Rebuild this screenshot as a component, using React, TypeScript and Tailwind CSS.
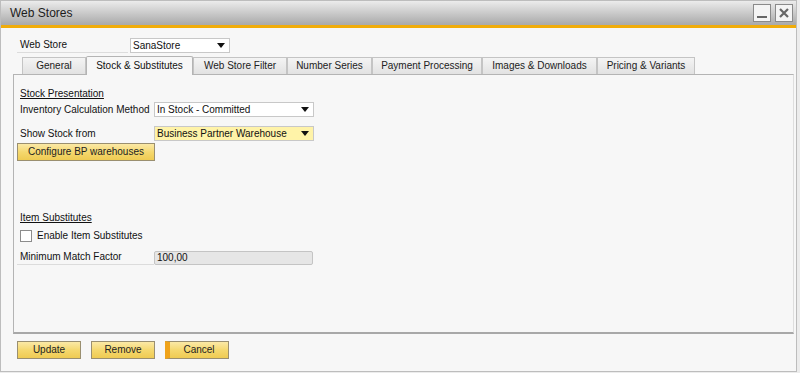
import React from "react";

const font = { fontFamily: '"Liberation Sans", Arial, sans-serif' };

function Arrow() {
  return (
    <svg width="8" height="5" viewBox="0 0 8 5" className="shrink-0">
      <path d="M0 0 H8 L4 5 Z" fill="#111" />
    </svg>
  );
}

function Select({ value, className }: { value: string; className: string }) {
  return (
    <div className={`flex h-[15px] items-center justify-between border border-[#c8c8c8] pl-[2px] pr-[4px] text-[10px] leading-none text-[#111] ${className}`}>
      <span>{value}</span>
      <Arrow />
    </div>
  );
}

function YButton({ label, w, cancel }: { label: string; w: string; cancel?: boolean }) {
  return (
    <div
      className={`flex h-[18px] ${w} items-center justify-center border border-[#9a8f70] bg-gradient-to-b from-[#fbe9a6] via-[#f5d86e] to-[#efcb52] text-[10px] leading-none text-[#222] ${cancel ? "border-l-[5px] border-l-[#f0a31a]" : ""}`}
    >
      {label}
    </div>
  );
}

const tabs = [
  { t: "General", w: "w-[64px]" },
  { t: "Stock & Substitutes", w: "w-[107px]", active: true },
  { t: "Web Store Filter", w: "w-[94px]" },
  { t: "Number Series", w: "w-[85px]" },
  { t: "Payment Processing", w: "w-[110px]" },
  { t: "Images & Downloads", w: "w-[115px]" },
  { t: "Pricing & Variants", w: "w-[98px]" },
];

export default function App() {
  return (
    <div className="h-[373px] w-[800px] bg-[#ececec]" style={font}>
      <div className="flex h-[372px] w-[797px] flex-col border border-[#bdbdbd] bg-[#f7f7f7]">
        {/* Title bar */}
        <div className="flex h-[24px] items-center justify-between bg-gradient-to-b from-[#ececec] to-[#a9a9a9] pl-[9px] pr-[3px]">
          <span className="text-[12px] leading-none text-[#1c1c1c]">Web Stores</span>
          <div className="flex gap-[4px]">
            <div className="flex h-[18px] w-[18px] items-end justify-center border border-[#8a8a8a] bg-[#f4f4f4] pb-[3px]">
              <div className="h-[2px] w-[10px] bg-[#666]" />
            </div>
            <div className="flex h-[18px] w-[18px] items-center justify-center border border-[#8a8a8a] bg-[#f4f4f4]">
              <svg width="10" height="10" viewBox="0 0 10 10">
                <path d="M1 1 L9 9 M9 1 L1 9" stroke="#666" strokeWidth="2.2" />
              </svg>
            </div>
          </div>
        </div>
        <div className="h-[3px] bg-[#f0ac0a]" />

        {/* Web store row */}
        <div className="mt-[10px] flex h-[15px] items-center pl-[16px]">
          <div className="flex h-[15px] w-[111px] items-center border-b border-[#dcdcdc] pl-[3px] text-[10px] leading-none text-[#111]">
            Web Store
          </div>
          <Select value="SanaStore" className="ml-[2px] w-[100px] bg-white" />
        </div>

        {/* Tabs */}
        <div className="mt-[3px] flex h-[18px] items-end pl-[21px]">
          {tabs.map((tab) =>
            tab.active ? (
              <div
                key={tab.t}
                className={`relative z-10 -mb-[1px] flex h-[19px] ${tab.w} items-center justify-center rounded-t-[2px] border border-b-0 border-[#b4b4b4] bg-[#f7f7f7] text-[10px] leading-none text-[#111]`}
              >
                {tab.t}
              </div>
            ) : (
              <div
                key={tab.t}
                className={`flex h-[17px] ${tab.w} items-center justify-center border border-b-0 border-[#c4c4c4] bg-gradient-to-b from-[#f4f4f4] to-[#e2e2e2] text-[10px] leading-none text-[#222]`}
              >
                {tab.t}
              </div>
            )
          )}
        </div>

        {/* Panel */}
        <div className="ml-[12px] flex h-[260px] w-[781px] flex-col border-l border-t border-[#b4b4b4] border-b-[2px] border-b-[#a8a8a8] border-r border-r-[#dedede] pl-[6px] text-[10px] leading-none text-[#111]">
          <div className="mt-[12px] flex h-[14px] items-center">
            <span className="underline">Stock Presentation</span>
          </div>
          <div className="mt-[1px] flex h-[15px] items-center">
            <div className="w-[134px]">Inventory Calculation Method</div>
            <Select value="In Stock - Committed" className="w-[160px] bg-white" />
          </div>
          <div className="mt-[9px] flex h-[15px] items-center">
            <div className="w-[134px]">Show Stock from</div>
            <Select value="Business Partner Warehouse" className="w-[160px] bg-[#fff3a8]" />
          </div>
          <div className="-ml-[3px] mt-[2px]">
            <YButton label="Configure BP warehouses" w="w-[138px]" />
          </div>

          <div className="mt-[50px] flex h-[14px] items-center">
            <span className="underline">Item Substitutes</span>
          </div>
          <div className="mt-[5px] flex h-[12px] items-center">
            <div className="h-[12px] w-[12px] border border-[#8c8c8c] bg-white" />
            <span className="ml-[5px]">Enable Item Substitutes</span>
          </div>
          <div className="mt-[8px] flex h-[15px] items-center">
            <div className="-ml-[3px] flex h-[15px] w-[137px] items-center border-b border-[#dcdcdc] pl-[3px]">
              Minimum Match Factor
            </div>
            <div className="flex h-[14px] w-[159px] items-center rounded-[2px] border border-[#c4c4c4] bg-[#e6e6e6] pl-[2px]">
              100,00
            </div>
          </div>
        </div>

        {/* Bottom buttons */}
        <div className="mt-[7px] flex gap-[10px] pl-[16px]">
          <YButton label="Update" w="w-[64px]" />
          <YButton label="Remove" w="w-[64px]" />
          <YButton label="Cancel" w="w-[64px]" cancel />
        </div>
      </div>
    </div>
  );
}
